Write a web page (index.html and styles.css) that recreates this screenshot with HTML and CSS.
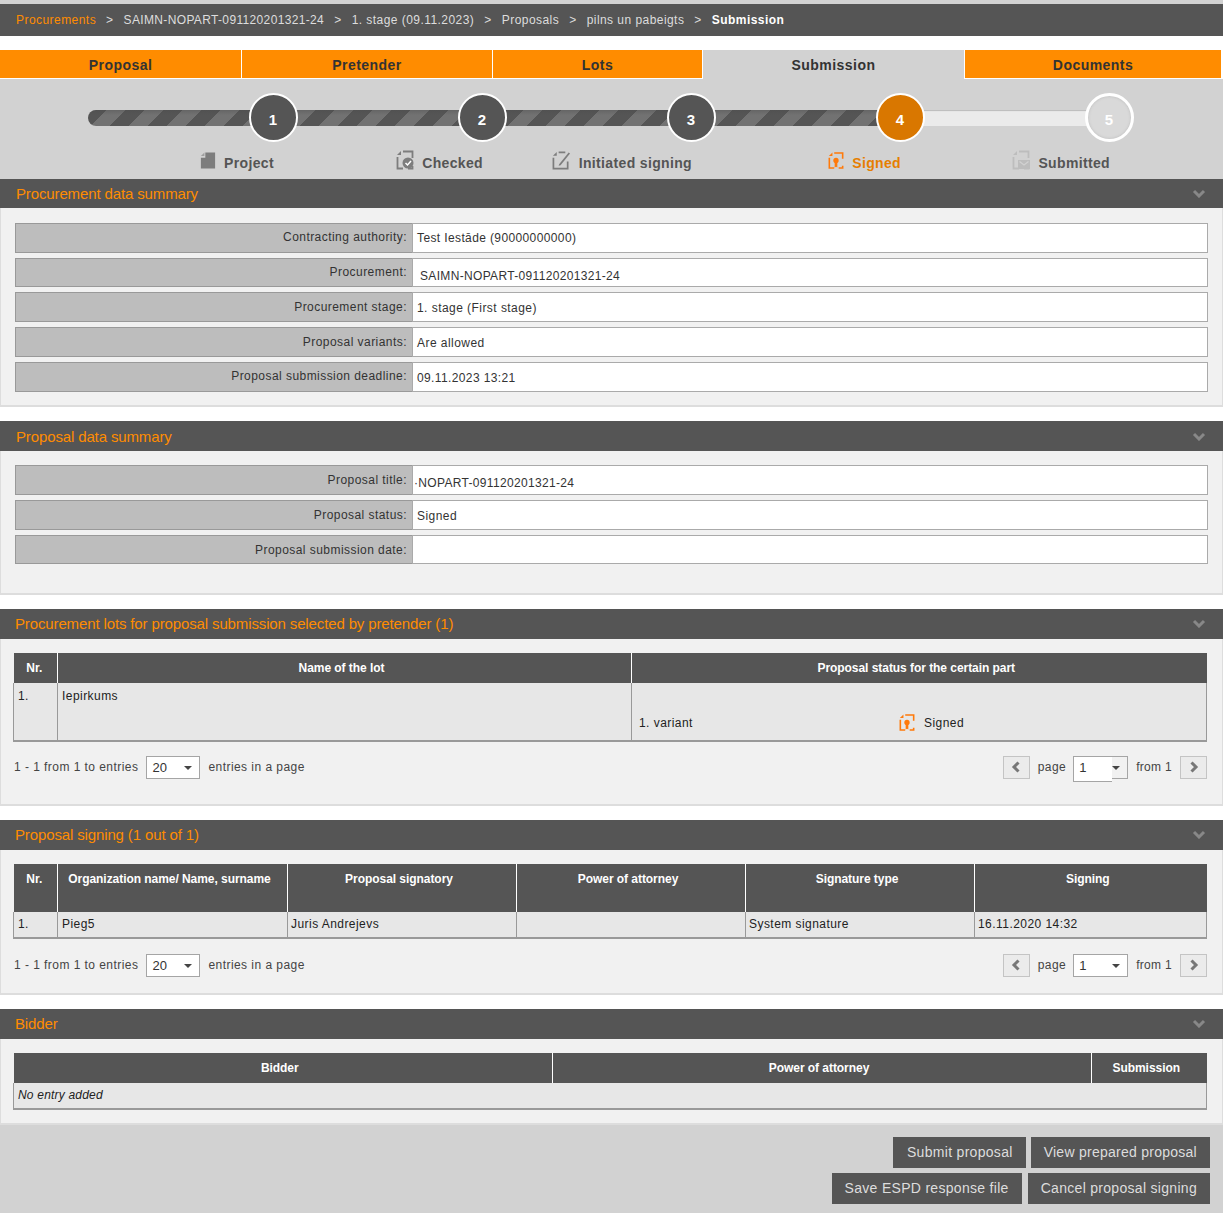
FILE: index.html
```html
<!DOCTYPE html>
<html lang="en">
<head>
<meta charset="utf-8">
<title>Submission</title>
<link rel="stylesheet" href="styles.css">
</head>
<body>
<svg class="defs" width="0" height="0">
  <symbol id="i-frame" viewBox="0 0 18 20"><path d="M1 5l4-4v4z" fill="currentColor"/><path d="M7 1.500h9.500V8M1.500 7v11.500H7M12 18.500h4.500V16" fill="none" stroke="currentColor" stroke-width="1.800"/></symbol>
</svg>
<nav class="crumbs">
  <a class="crumb-link">Procurements</a><span class="sep">&gt;</span><span class="code">SAIMN-NOPART-091120201321-24</span><span class="sep">&gt;</span><span>1. stage (09.11.2023)</span><span class="sep">&gt;</span><span>Proposals</span><span class="sep">&gt;</span><span>pilns un pabeigts</span><span class="sep">&gt;</span><b>Submission</b>
</nav>
<div class="tabs">
  <div class="tab t1">Proposal</div>
  <div class="tab t2">Pretender</div>
  <div class="tab t3">Lots</div>
  <div class="tab t4 active">Submission</div>
  <div class="tab t5">Documents</div>
</div>
<div class="stepper">
  <div class="track-row">
    <div class="track"><div class="track-done"></div></div>
    <div class="circle dark">1</div>
    <div class="circle dark">2</div>
    <div class="circle dark">3</div>
    <div class="circle orange">4</div>
    <div class="circle pale">5</div>
  </div>
  <div class="steps">
    <div class="step"><svg class="sicon grey" viewBox="0 0 18 20" width="16" height="19"><path d="M6 1h11v18H1V7h5z" fill="currentColor"/><path d="M1 5l4-4v4z" fill="currentColor" opacity=".6"/></svg><span>Project</span></div>
    <div class="step"><svg class="sicon grey" viewBox="0 0 18 20" width="18" height="20"><use href="#i-frame"/><circle cx="12" cy="13" r="5.500" fill="#7d7d7d"/><path d="M9.500 13l2 2 3.500-4" fill="none" stroke="#fff" stroke-width="1.500"/></svg><span>Checked</span></div>
    <div class="step"><svg class="sicon grey" viewBox="0 0 20 20" width="19" height="19"><path d="M1 5l4-4v4z" fill="currentColor"/><path d="M7 1.500h7M1.500 7v11.500h15V11" fill="none" stroke="currentColor" stroke-width="1.800"/><path d="M7.500 14L17.500 1.500l1.500 1.200L9 15l-2 .5z" fill="currentColor"/></svg><span>Initiated signing</span></div>
    <div class="step on"><svg class="sicon" viewBox="0 0 18 20" width="16" height="19"><use href="#i-frame"/><circle cx="9" cy="10" r="3" fill="currentColor"/><path d="M7.500 12h3v6l-1.500-1-1.500 1z" fill="currentColor"/></svg><span>Signed</span></div>
    <div class="step"><svg class="sicon light" viewBox="0 0 18 20" width="18" height="20"><use href="#i-frame"/><rect x="6" y="10" width="12" height="9" fill="#bdbdbd"/><path d="M7.500 11.500l4.500 3.500 4.500-3.500" fill="none" stroke="#d2d2d2" stroke-width="1.200"/></svg><span>Submitted</span></div>
  </div>
</div>

<section class="sec">
  <h2 class="sec-h"><span>Procurement data summary</span><svg class="chev" viewBox="0 0 14 9" width="14" height="9"><path d="M2 2l5 5 5-5" fill="none" stroke="#888" stroke-width="3"/></svg></h2>
  <div class="panel sum sum1">
    <div class="row r30"><div class="lab">Contracting authority:</div><div class="val num up">Test Iestāde (90000000000)</div></div>
    <div class="row r29"><div class="lab">Procurement:</div><div class="val tight ind down">SAIMN-NOPART-091120201321-24</div></div>
    <div class="row r30"><div class="lab lab6">Procurement stage:</div><div class="val">1. stage (First stage)</div></div>
    <div class="row r30"><div class="lab lab6">Proposal variants:</div><div class="val">Are allowed</div></div>
    <div class="row r30"><div class="lab">Proposal submission deadline:</div><div class="val num">09.11.2023 13:21</div></div>
  </div>
</section>

<section class="sec">
  <h2 class="sec-h h30"><span>Proposal data summary</span><svg class="chev" viewBox="0 0 14 9" width="14" height="9"><path d="M2 2l5 5 5-5" fill="none" stroke="#888" stroke-width="3"/></svg></h2>
  <div class="panel sum sum2">
    <div class="row r30"><div class="lab lab6">Proposal title:</div><div class="val tight flush down">·NOPART-091120201321-24</div></div>
    <div class="row r30"><div class="lab lab6">Proposal status:</div><div class="val">Signed</div></div>
    <div class="row r29"><div class="lab lab6">Proposal submission date:</div><div class="val"></div></div>
  </div>
</section>

<section class="sec">
  <h2 class="sec-h h30 low"><span>Procurement lots for proposal submission selected by pretender (1)</span><svg class="chev" viewBox="0 0 14 9" width="14" height="9"><path d="M2 2l5 5 5-5" fill="none" stroke="#888" stroke-width="3"/></svg></h2>
  <div class="panel tp p167">
    <table class="grid">
      <colgroup><col class="c44"><col class="c574"><col></colgroup>
      <thead><tr class="hr30"><th class="nr">Nr.</th><th>Name of the lot</th><th>Proposal status for the certain part</th></tr></thead>
      <tbody><tr class="lot-row"><td>1.</td><td>Iepirkums</td><td class="bottom"><div class="variant"><span class="vname">1. variant</span><svg class="vicon" viewBox="0 0 18 20" width="16" height="19"><use href="#i-frame"/><circle cx="9" cy="10" r="3" fill="currentColor"/><path d="M7.500 12h3v6l-1.500-1-1.500 1z" fill="currentColor"/></svg><span>Signed</span></div></td></tr></tbody>
    </table>
    <div class="pager pager-up">
      <span>1 - 1 from 1 to entries</span><span class="sel s20">20<i class="caret"></i></span><span>entries in a page</span>
      <span class="spacer"></span>
      <span class="pbtn"><svg viewBox="0 0 10 12" width="10" height="12"><path d="M7.500 1.500L3 6l4.500 4.500" fill="none" stroke="#777" stroke-width="3"/></svg></span><span>page</span><span class="sel s1 odd">1<i class="caret"></i></span><span class="from">from 1</span><span class="pbtn"><svg viewBox="0 0 10 12" width="10" height="12"><path d="M2.500 1.500L7 6l-4.500 4.500" fill="none" stroke="#777" stroke-width="3"/></svg></span>
    </div>
  </div>
</section>

<section class="sec">
  <h2 class="sec-h h30 low"><span>Proposal signing (1 out of 1)</span><svg class="chev" viewBox="0 0 14 9" width="14" height="9"><path d="M2 2l5 5 5-5" fill="none" stroke="#888" stroke-width="3"/></svg></h2>
  <div class="panel tp p145">
    <table class="grid">
      <colgroup><col class="c44"><col class="c230"><col class="c229"><col class="c229"><col class="c229"><col></colgroup>
      <thead><tr class="hr48"><th class="nr">Nr.</th><th>Organization name/ Name, surname</th><th>Proposal signatory</th><th>Power of attorney</th><th>Signature type</th><th>Signing</th></tr></thead>
      <tbody><tr class="sign-row"><td>1.</td><td>Pieg5</td><td class="near">Juris Andrejevs</td><td></td><td class="near">System signature</td><td class="near">16.11.2020 14:32</td></tr></tbody>
    </table>
    <div class="pager">
      <span>1 - 1 from 1 to entries</span><span class="sel s20">20<i class="caret"></i></span><span>entries in a page</span>
      <span class="spacer"></span>
      <span class="pbtn"><svg viewBox="0 0 10 12" width="10" height="12"><path d="M7.500 1.500L3 6l4.500 4.500" fill="none" stroke="#777" stroke-width="3"/></svg></span><span>page</span><span class="sel s1">1<i class="caret"></i></span><span class="from">from 1</span><span class="pbtn"><svg viewBox="0 0 10 12" width="10" height="12"><path d="M2.500 1.500L7 6l-4.500 4.500" fill="none" stroke="#777" stroke-width="3"/></svg></span>
    </div>
  </div>
</section>

<section class="sec">
  <h2 class="sec-h h30 low"><span>Bidder</span><svg class="chev" viewBox="0 0 14 9" width="14" height="9"><path d="M2 2l5 5 5-5" fill="none" stroke="#888" stroke-width="3"/></svg></h2>
  <div class="panel tp p85">
    <table class="grid">
      <colgroup><col class="c539"><col class="c539"><col></colgroup>
      <thead><tr class="hr30"><th>Bidder</th><th>Power of attorney</th><th>Submission</th></tr></thead>
      <tbody><tr class="sign-row"><td colspan="3" class="none">No entry added</td></tr></tbody>
    </table>
  </div>
</section>

<footer class="actions">
  <div class="act-row"><a class="btn b1">Submit proposal</a><a class="btn b4">View prepared proposal</a></div>
  <div class="act-row"><a class="btn b2">Save ESPD response file</a><a class="btn b3">Cancel proposal signing</a></div>
</footer>
</body>
</html>
```

FILE: styles.css
```css
* { box-sizing: border-box; }
html, body { margin: 0; padding: 0; }
body {
  width: 1223px;
  font: 12px/16px "Liberation Sans", Arial, sans-serif;
  letter-spacing: .45px;
  color: #333;
  background: #fff;
  border-top: 4px solid #d2d2d2;
  overflow-x: hidden;
}
.defs { position: absolute; }

.crumbs {
  height: 32px;
  background: #555;
  color: #ddd;
  display: flex;
  align-items: center;
  padding-left: 16px;
  white-space: nowrap;
}
.crumbs b { color: #fff; }
.crumb-link { color: #ff8c00; }
.code { letter-spacing: .35px; }
.sep { margin: 0 10px; }

.tabs { display: flex; margin-top: 14px; height: 29px; background: #d2d2d2; }
.tab {
  height: 29px;
  line-height: 30px;
  text-align: center;
  font-size: 14px;
  font-weight: bold;
  color: #333;
  background: #ff8c00;
  border-right: 1px solid #fff;
  border-bottom: 1px solid #fff;
  letter-spacing: .45px;
}
.tab.active { background: #d2d2d2; border-bottom: 0; }
.t1 { width: 242px; }
.t2 { width: 251px; }
.t3 { width: 210px; }
.t4 { width: 262px; }
.t5 { width: 258px; border-right: 2px solid #fff; }

.stepper { height: 100px; background: #d2d2d2; padding-top: 14px; }
.track-row {
  position: relative;
  height: 49px;
  display: grid;
  grid-template-columns: repeat(5, 209px);
  padding-left: 64px;
}
.track {
  position: absolute;
  left: 88px;
  width: 1025px;
  top: 17px;
  height: 16px;
  border-radius: 8px;
  background: #ebebeb;
  overflow: hidden;
  box-shadow: inset 0 1px 1px #bbb;
}
.track-done {
  width: 800px;
  height: 100%;
  background:
    linear-gradient(#4a4a4a55, #0000 5px),
    repeating-linear-gradient(135deg, #555 0 13.400px, #727272 13.400px 26.800px);
}
.circle {
  position: relative;
  justify-self: end;
  margin-right: -24.500px;
  width: 49px;
  height: 49px;
  border-radius: 50%;
  border: 2px solid #fff;
  display: flex;
  align-items: center;
  justify-content: center;
  padding-top: 4px;
  color: #fff;
  font-size: 15px;
  font-weight: bold;
  letter-spacing: 0;
}
.dark { background: #555; }
.orange { background: #d97700; }
.pale { background: #d9d9d9; border-width: 3px; box-shadow: inset 0 0 3px #bbb; }

.steps {
  display: grid;
  grid-template-columns: repeat(5, 209px);
  padding-left: 65px;
  margin-top: 11px;
}
.step {
  display: flex;
  justify-content: flex-end;
  align-items: center;
  height: 20px;
  gap: 8px;
  font-size: 14px;
  font-weight: bold;
  color: #555;
  letter-spacing: .35px;
}
.sicon { margin-bottom: 6px; }
.step.on { color: #e67e00; }
.step.on .sicon { color: #ff7a0a; }
.sicon.grey { color: #7d7d7d; }
.sicon.light { color: #bdbdbd; }

.sec { margin-bottom: 14px; }
.sec-h {
  margin: 0;
  height: 29px;
  background: #555;
  color: #ff8c00;
  font-size: 15px;
  font-weight: normal;
  letter-spacing: -.13px;
  line-height: 29px;
  padding: 0 16px;
  display: flex;
  justify-content: space-between;
  align-items: center;
}
.sec-h.h30 { height: 30px; }
.sec-h.low { padding: 0 16px 1px 15px; }
.chev { margin-right: 1px; }

.panel {
  background: #f1f1f1;
  border: 1px solid #ddd;
  border-width: 0 1px 2px 1px;
}
.sum { padding: 15px 14px 0; display: flex; flex-direction: column; gap: 5px; }
.sum1 { height: 199px; }
.sum2 { height: 144px; padding-top: 14px; }
.row { display: flex; width: 1193px; }
.r29 { height: 29px; }
.r30 { height: 30px; }
.lab {
  width: 397px;
  background: #bdbdbd;
  border-top: 1px solid #999;
  border-bottom: 1px solid #999;
  border-left: 1px solid #999;
  text-align: right;
  padding: 5px 5px 0 0;
  color: #333;
}
.lab6 { padding-top: 6px; }
.val {
  flex: 1;
  background: #fff;
  border: 1px solid #aaa;
  padding: 7px 0 0 4px;
  color: #333;
  white-space: nowrap;
}
.up { padding-top: 6px; }
.down { padding-top: 9px; }
.num { letter-spacing: .38px; }
.tight { letter-spacing: .33px; }
.ind { padding-left: 7px; }
.flush { padding-left: 1px; }

.tp { padding: 14px 14px 0 12px; }
.p167 { height: 167px; }
.p145 { height: 145px; }
.p85 { height: 86px; }

.grid {
  width: 1194px;
  table-layout: fixed;
  border-collapse: collapse;
}
.c44 { width: 44px; }
.c574 { width: 574px; }
.c230 { width: 230px; }
.c229 { width: 229px; }
.c539 { width: 539px; }
.grid th {
  background: #555;
  color: #fff;
  font-weight: bold;
  letter-spacing: -.05px;
  text-align: center;
  vertical-align: top;
  padding: 7px 7px 0 1px;
  border-right: 1px solid #fff;
}
.grid th.nr { padding: 7px 4px 0 2px; }
.grid th:last-child { border-right: 0; }
.grid td {
  background: #e7e7e7;
  color: #222;
  vertical-align: top;
  padding: 4px 4px 0;
  border: 1px solid #999;
  border-top: 0;
  border-bottom-width: 2px;
}
.grid td.near { padding-left: 3px; }
.hr30 { height: 30px; }
.hr48 { height: 48px; }
.lot-row { height: 58px; }
.lot-row td { padding-top: 5px; }
.sign-row { height: 26px; }
.grid td.bottom { padding: 30px 7px 0; }
.variant { display: flex; align-items: center; }
.vname { width: 260px; }
.vicon { color: #ff7a0a; margin-right: 9px; }
.none { font-style: italic; letter-spacing: .2px; }

.pager {
  display: flex;
  align-items: center;
  gap: 8px;
  margin-top: 14px;
  margin-left: 1px;
  height: 24px;
  width: 1193px;
  color: #444;
  white-space: nowrap;
}
.pager-up { margin-top: 13px; }
.spacer { flex: 1; }
.from { letter-spacing: .3px; }
.sel {
  position: relative;
  height: 23px;
  background: #fff;
  border: 1px solid #a5a5a5;
  padding: 3px 5px;
  color: #333;
  font-size: 13px;
  letter-spacing: 0;
}
.s20 { width: 54px; }
.s1 { width: 55px; margin-left: -1px; }
.odd { background: #f1f1f1; isolation: isolate; }
.odd::before {
  content: "";
  position: absolute;
  z-index: -1;
  left: -1px;
  top: -1px;
  width: 38px;
  height: 24px;
  background: #fff;
  border: 1px solid #a5a5a5;
  border-right: 0;
}
.caret {
  position: absolute;
  right: 7px;
  top: 9px;
  border: 4px solid transparent;
  border-top: 4px solid #444;
  border-bottom: 0;
}
.pbtn {
  width: 27px;
  height: 23px;
  background: #ebebeb;
  border: 1px solid #c4c4c4;
  display: flex;
  align-items: center;
  justify-content: center;
}

.actions {
  background: #d2d2d2;
  height: 88px;
  margin-top: -14px;
  padding: 12px 13px 0 0;
  display: flex;
  flex-direction: column;
  gap: 5px;
}
.act-row { display: flex; justify-content: flex-end; gap: 5px; }
.btn {
  height: 31px;
  line-height: 31px;
  padding: 0 13px;
  background: #555;
  color: #ddd;
  font-size: 14px;
  letter-spacing: .3px;
}
.b1 { padding: 0 13px 0 13.500px; }
.b4 { letter-spacing: .26px; }
.b2 { margin-right: 1px; }
```
